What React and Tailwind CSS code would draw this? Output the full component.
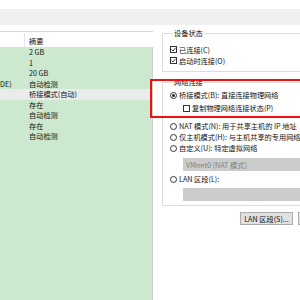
import React from 'react';

const rows = [
  { a: '', b: '2 GB' },
  { a: '', b: '1' },
  { a: '', b: '20 GB' },
  { a: 'DE)', b: '自动检测' },
  { a: '', b: '桥接模式(自动)', sel: true },
  { a: '', b: '存在' },
  { a: '', b: '自动检测' },
  { a: '', b: '存在' },
  { a: '', b: '自动检测' },
];

const CheckBox = ({ checked }) => (
  <span className="w-[7px] h-[7px] border border-[#333] bg-white flex items-center justify-center shrink-0">
    {checked && (
      <svg width="5" height="5" viewBox="0 0 5 5">
        <path d="M0.5 2.5 L2 4 L4.6 0.8" fill="none" stroke="#222" strokeWidth="0.9" />
      </svg>
    )}
  </span>
);

const Radio = ({ checked }) => (
  <span className="w-[7px] h-[7px] rounded-full border border-[#333] bg-white flex items-center justify-center shrink-0">
    {checked && <span className="w-[3px] h-[3px] rounded-full bg-[#222]" />}
  </span>
);

const Row = ({ children, className = '' }) => (
  <div className={'h-[11px] flex items-center gap-[2px] ' + className}>{children}</div>
);

export default function App() {
  return (
    <div
      className="w-[300px] h-[300px] overflow-hidden bg-white relative text-[7.2px] text-[#111] leading-[10px]"
      style={{ fontFamily: '"Noto Sans CJK SC", "Microsoft YaHei", sans-serif' }}
    >
      <div className="h-[9px]" />
      <div className="h-[16px] bg-[#f0f0f0]" />

      <div className="flex h-[275px]">
        {/* 硬件列表 */}
        <div className="w-[153px] pt-[6px] flex flex-col shrink-0">
          <div className="h-[16px] border-t border-[#d9d9d9] bg-white flex items-center">
            <div className="w-[25px] h-[14px] border-r border-[#e3e3e3]" />
            <span className="pl-[4px] pt-[3px]">摘要</span>
          </div>
          <div className="flex-1 bg-[#cce8cf] border-r border-[#c9cfca]">
            {rows.map((r, i) => (
              <div key={i} className={'h-[10.5px] flex items-center ' + (r.sel ? 'bg-[#e9ecea]' : '')}>
                <span className="w-[25px] shrink-0">{r.a}</span>
                <span className="pl-[4px] whitespace-nowrap">{r.b}</span>
              </div>
            ))}
          </div>
        </div>

        {/* 设置面板 */}
        <div className="flex-1 pl-[9px] pt-[3px] flex flex-col">
          <fieldset className="w-[150px] border border-[#dcdcdc] pl-[7px] pt-[6px] pb-[5px]">
            <legend className="ml-[3px] px-[1px]">设备状态</legend>
            <Row><CheckBox checked /><span>已连接(C)</span></Row>
            <Row><CheckBox checked /><span>启动时连接(O)</span></Row>
          </fieldset>

          <fieldset className="mt-[5px] w-[150px] border border-[#dcdcdc] pl-[7px] pt-[2.5px] pb-[4px]">
            <legend className="ml-[3px] px-[1px]">网络连接</legend>
            <Row><Radio checked /><span className="whitespace-nowrap">桥接模式(B): 直接连接物理网络</span></Row>
            <Row className="mt-[2px] pl-[13px]"><CheckBox /><span className="whitespace-nowrap">复制物理网络连接状态(P)</span></Row>
            <Row className="mt-[7px]"><Radio /><span className="whitespace-nowrap">NAT 模式(N): 用于共享主机的 IP 地址</span></Row>
            <Row><Radio /><span className="whitespace-nowrap">仅主机模式(H): 与主机共享的专用网络</span></Row>
            <Row><Radio /><span className="whitespace-nowrap">自定义(U): 特定虚拟网络</span></Row>
            <div className="mt-[4.5px] ml-[13px] h-[13px] bg-[#cccccc] flex items-center pl-[3px] text-[#7f7f7f] whitespace-nowrap">
              VMnet0 (NAT 模式)
            </div>
            <Row className="mt-[2.5px]"><Radio /><span className="whitespace-nowrap">LAN 区段(L):</span></Row>
            <div className="mt-[3.5px] ml-[13px] h-[13px] bg-[#cccccc]" />
          </fieldset>

          <div className="mt-[6px] ml-[78px] flex gap-[5px]">
            <div className="w-[53px] h-[13px] shrink-0 bg-[#e1e1e1] border border-[#adadad] flex items-center justify-center whitespace-nowrap">
              LAN 区段(S)...
            </div>
            <div className="w-[53px] h-[13px] shrink-0 bg-[#e1e1e1] border border-[#adadad]" />
          </div>
        </div>
      </div>

      {/* 红色标注框 */}
      <div className="absolute left-[150px] top-[79px] w-[160px] h-[39px] border-2 border-[#ee1111]" />
    </div>
  );
}
